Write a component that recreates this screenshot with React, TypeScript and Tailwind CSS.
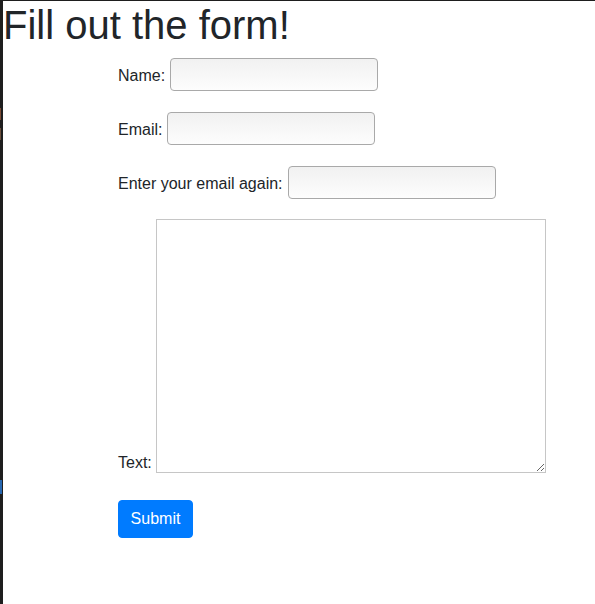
import React from 'react';

// Thin editor edge on the left side of the capture
const EditorEdge = () => (
  <div className="w-[3px] h-[604px] bg-[#1e1e1e] flex flex-col shrink-0">
    <div className="h-[108px]" />
    <div className="h-[12px] w-[1px] bg-[#7a4a34]" />
    <div className="h-[8px]" />
    <div className="h-[12px] w-[1px] bg-[#6a4e3c]" />
    <div className="h-[340px]" />
    <div className="h-[14px] w-[2px] bg-[#2767b0]" />
  </div>
);

const inputClass =
  "w-[208px] h-[33px] rounded-[4px] border border-[#a9a9a9] bg-gradient-to-b from-[#f1f1f1] to-[#fdfdfd] outline-none";

const App: React.FC = () => {
  return (
    <div className="flex w-[595px] h-[604px] bg-white text-[#212529] font-['Liberation_Sans',Arial,sans-serif] overflow-hidden">
      <EditorEdge />
      <div className="flex-1 border-t border-[#1e1e1e]">
        <h1 className="text-[40px] leading-[48px] font-medium">Fill out the form!</h1>

        <form className="flex flex-col items-start pl-[115px] pt-[9px] text-base" onSubmit={(e) => e.preventDefault()}>
          <div className="flex items-center h-[33px] mb-[21px]">
            <label className="mr-[5px] mt-[2px]">Name:</label>
            <input type="text" className={inputClass} />
          </div>

          <div className="flex items-center h-[33px] mb-[21px]">
            <label className="mr-[5px] mt-[2px]">Email:</label>
            <input type="email" className={inputClass} />
          </div>

          <div className="flex items-center h-[33px] mb-[20px]">
            <label className="mr-[5px] mt-[2px]">Enter your email again:</label>
            <input type="email" className={inputClass} />
          </div>

          <div className="flex items-end mb-[27px]">
            <label className="mr-[4px] mb-[2px] leading-4">Text:</label>
            <textarea className="w-[390px] h-[254px] border border-[#c6c6c6] bg-white resize outline-none" />
          </div>

          <button
            type="submit"
            className="h-[38px] w-[75px] rounded-[4px] bg-[#007bff] text-white text-base border border-[#007bff]"
          >
            Submit
          </button>
        </form>
      </div>
    </div>
  );
};

export default App;
